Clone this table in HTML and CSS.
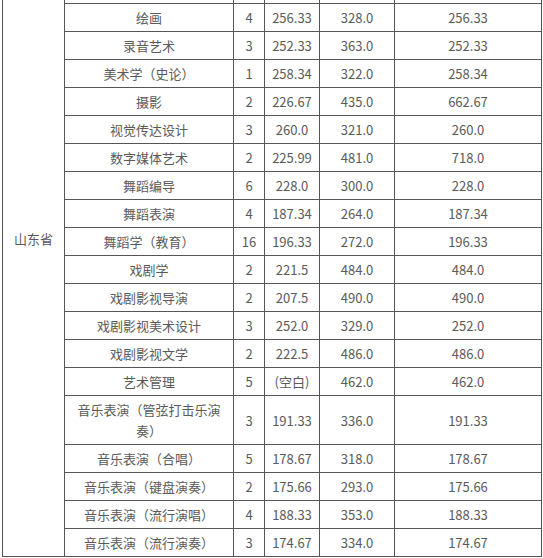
FILE: index.html
```html
<!DOCTYPE html>
<html lang="zh-CN">
<head>
<meta charset="utf-8">
<title>山东省 艺术类专业录取分数</title>
<link rel="stylesheet" href="styles.css">
</head>
<body>
<div class="viewport">
<table class="scores">
<colgroup>
<col class="c-prov"><col class="c-major"><col class="c-num"><col class="c-s1"><col class="c-s2"><col class="c-s3">
</colgroup>
<tbody>
<tr class="hidden-row"><td class="prov" rowspan="22">山东省</td><td></td><td></td><td></td><td></td><td></td></tr>
<tr class="hidden-row"><td></td><td></td><td></td><td></td><td></td></tr>
<tr class="hidden-row"><td></td><td></td><td></td><td></td><td></td></tr>
<tr><td>绘画</td><td>4</td><td>256.33</td><td>328.0</td><td>256.33</td></tr>
<tr><td>录音艺术</td><td>3</td><td>252.33</td><td>363.0</td><td>252.33</td></tr>
<tr><td>美术学（史论）</td><td>1</td><td>258.34</td><td>322.0</td><td>258.34</td></tr>
<tr><td>摄影</td><td>2</td><td>226.67</td><td>435.0</td><td>662.67</td></tr>
<tr><td>视觉传达设计</td><td>3</td><td>260.0</td><td>321.0</td><td>260.0</td></tr>
<tr><td>数字媒体艺术</td><td>2</td><td>225.99</td><td>481.0</td><td>718.0</td></tr>
<tr><td>舞蹈编导</td><td>6</td><td>228.0</td><td>300.0</td><td>228.0</td></tr>
<tr><td>舞蹈表演</td><td>4</td><td>187.34</td><td>264.0</td><td>187.34</td></tr>
<tr><td>舞蹈学（教育）</td><td>16</td><td>196.33</td><td>272.0</td><td>196.33</td></tr>
<tr><td>戏剧学</td><td>2</td><td>221.5</td><td>484.0</td><td>484.0</td></tr>
<tr><td>戏剧影视导演</td><td>2</td><td>207.5</td><td>490.0</td><td>490.0</td></tr>
<tr><td>戏剧影视美术设计</td><td>3</td><td>252.0</td><td>329.0</td><td>252.0</td></tr>
<tr><td>戏剧影视文学</td><td>2</td><td>222.5</td><td>486.0</td><td>486.0</td></tr>
<tr><td>艺术管理</td><td>5</td><td>(空白)</td><td>462.0</td><td>462.0</td></tr>
<tr><td>音乐表演（管弦打击乐演奏）</td><td>3</td><td>191.33</td><td>336.0</td><td>191.33</td></tr>
<tr><td>音乐表演（合唱）</td><td>5</td><td>178.67</td><td>318.0</td><td>178.67</td></tr>
<tr><td>音乐表演（键盘演奏）</td><td>2</td><td>175.66</td><td>293.0</td><td>175.66</td></tr>
<tr><td>音乐表演（流行演唱）</td><td>4</td><td>188.33</td><td>353.0</td><td>188.33</td></tr>
<tr><td>音乐表演（流行演奏）</td><td>3</td><td>174.67</td><td>334.0</td><td>174.67</td></tr>
</tbody>
</table>
</div>
</body>
</html>
```

FILE: styles.css
```css
html, body {
  margin: 0;
  padding: 0;
  background: #fff;
}

.viewport {
  height: 558px;
  overflow: hidden;
}

.scores {
  border-collapse: collapse;
  table-layout: fixed;
  width: 539px;
  margin: -81px 0 0 2px;
  font-family: "Noto Sans CJK TC", "Noto Sans CJK SC", "Noto Sans", sans-serif;
  font-size: 13px;
  color: #5a5a5a;
  text-spacing-trim: space-all;
  font-feature-settings: "chws" 0, "halt" 0, "palt" 0;
}

.c-prov { width: 62px; }
.c-major { width: 169px; }
.c-num { width: 31px; }
.c-s1 { width: 55px; }
.c-s2 { width: 75px; }
.c-s3 { width: 147px; }

.scores td {
  border: 1px solid #555;
  text-align: center;
  vertical-align: middle;
  line-height: 21px;
  padding: 3px 8px;
  height: 21px;
}

.scores td:nth-last-child(-n+4) {
  padding-left: 2px;
  padding-right: 2px;
}

.scores .prov {
  padding: 0 4px;
}
```
